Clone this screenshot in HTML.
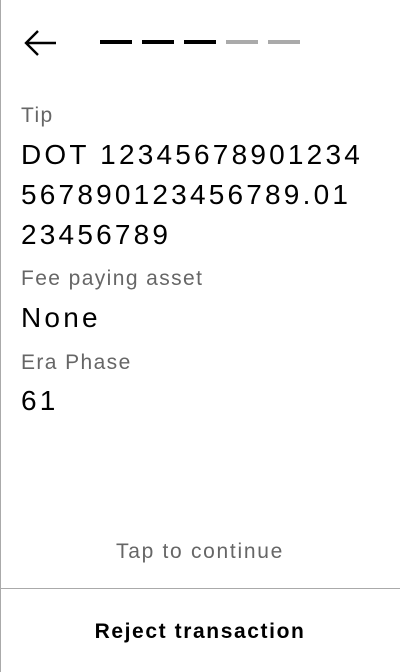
<!DOCTYPE html>
<html><head><style>
body{margin:0;width:400px;height:672px;overflow:hidden;background:#fff;font-family:"Liberation Sans",sans-serif;position:relative}
.lb{position:absolute;left:0;top:0;width:1px;height:672px;background:#aaa}
.bar{position:absolute;top:40px;height:4px;width:32px}
.t{position:absolute;left:21px;white-space:nowrap}
.l{font-size:21px;color:#666;letter-spacing:1.4px}
.v{font-size:28px;color:#000;line-height:40px;letter-spacing:3.2px}
</style></head><body>
<div class="lb"></div>
<svg style="position:absolute;left:22px;top:28px" width="38" height="32" viewBox="0 0 38 32"><path d="M34 15H4M16 3L4 15L16 27" fill="none" stroke="#000" stroke-width="2.4"/></svg>
<div class="bar" style="left:100px;background:#000"></div>
<div class="bar" style="left:142px;background:#000"></div>
<div class="bar" style="left:184px;background:#000"></div>
<div class="bar" style="left:226px;background:#aaa"></div>
<div class="bar" style="left:268px;background:#aaa"></div>
<div class="t l" style="top:104px">Tip</div>
<div class="t v" style="top:135px">DOT 12345678901234<br>567890123456789.01<br>23456789</div>
<div class="t l" style="top:267px">Fee paying asset</div>
<div class="t v" style="top:298px">None</div>
<div class="t l" style="top:351px">Era Phase</div>
<div class="t v" style="top:381px">61</div>
<div style="position:absolute;left:0;width:400px;top:540px;text-align:center;font-size:21px;color:#666;letter-spacing:1.7px">Tap to continue</div>
<div style="position:absolute;left:0;top:588px;width:400px;height:1px;background:#aaa"></div>
<div style="position:absolute;left:0;width:400px;top:620px;text-align:center;font-size:21px;font-weight:bold;color:#000;letter-spacing:1.6px">Reject transaction</div>
</body></html>
